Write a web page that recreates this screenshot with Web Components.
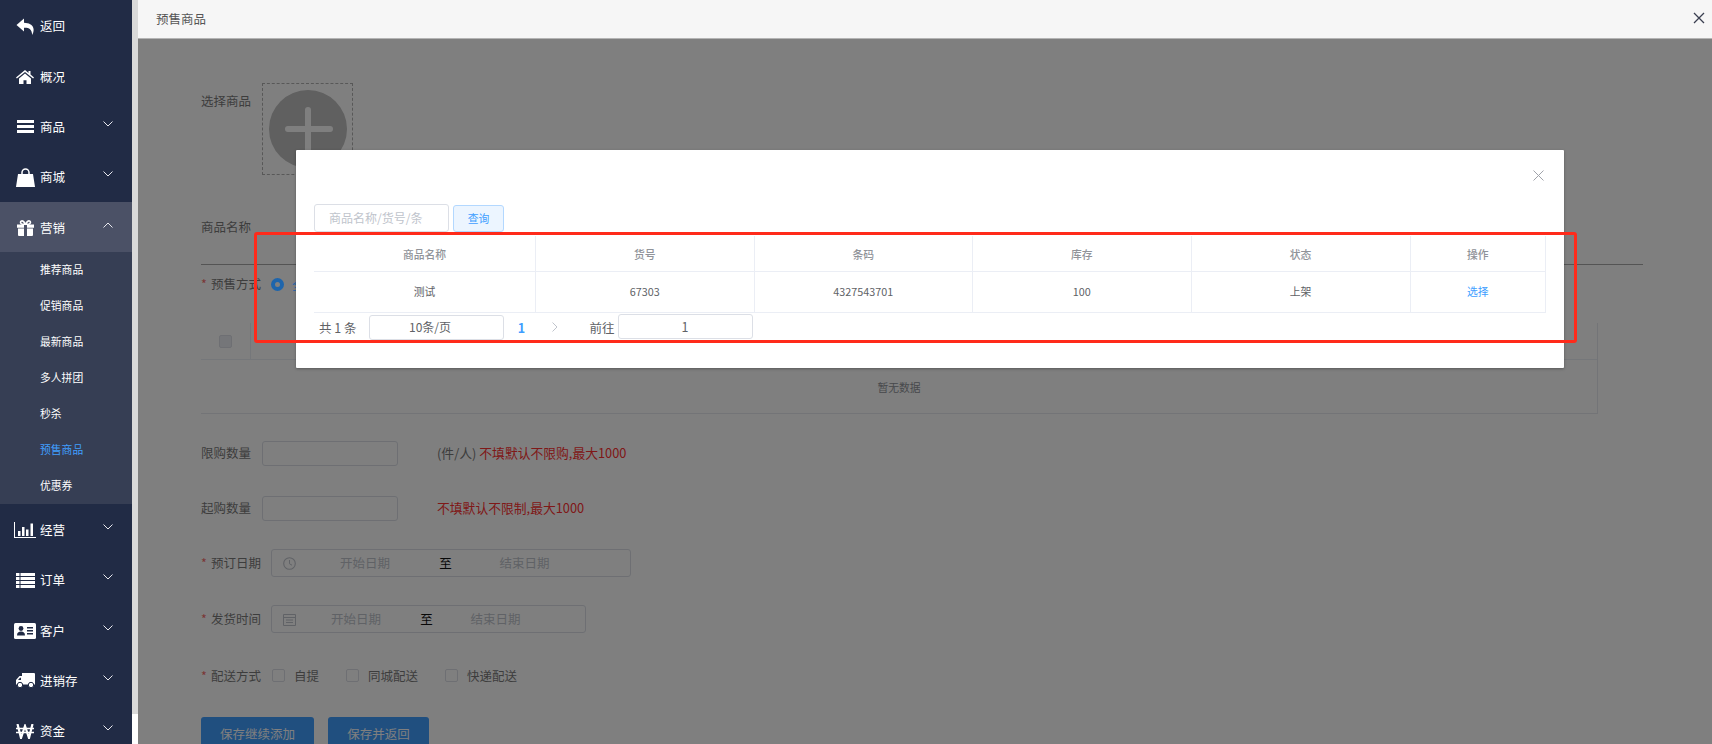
<!DOCTYPE html>
<html lang="zh-CN"><head><meta charset="utf-8"><title>预售商品</title>
<style>
html,body{margin:0;padding:0;height:100%;overflow:hidden;background:#fff}
body{font:12.5px/1.2 "Noto Sans CJK SC","Liberation Sans",sans-serif;color:#606266}
</style></head><body>
<app-page>
  <side-nav slot="nav">
    <nav-item icon="reply">返回</nav-item>
    <nav-item icon="home">概况</nav-item>
    <nav-item icon="bars" chev="down">商品</nav-item>
    <nav-item icon="bag" chev="down">商城</nav-item>
    <nav-item icon="gift" chev="up" active>营销</nav-item>
    <nav-group>
      <nav-sub>推荐商品</nav-sub><nav-sub>促销商品</nav-sub><nav-sub>最新商品</nav-sub><nav-sub>多人拼团</nav-sub><nav-sub>秒杀</nav-sub><nav-sub current>预售商品</nav-sub><nav-sub>优惠券</nav-sub>
    </nav-group>
    <nav-item icon="chart" chev="down">经营</nav-item>
    <nav-item icon="list" chev="down">订单</nav-item>
    <nav-item icon="card" chev="down">客户</nav-item>
    <nav-item icon="truck" chev="down">进销存</nav-item>
    <nav-item icon="won" chev="down">资金</nav-item>
  </side-nav>
  <page-head slot="head">预售商品</page-head>

  <form-row style="margin-top:44px;height:92px;align-items:flex-start"><span slot="label" style="padding-top:10px;display:block">选择商品</span><upload-box></upload-box></form-row>
  <form-row style="margin-top:37px;height:28px"><span slot="label">商品名称</span></form-row>
  <form-rule style="margin-top:24px"></form-rule>
  <form-row req lift style="margin-top:5px;height:28px"><span slot="label">预售方式</span><radio-dot></radio-dot></form-row>
  <empty-table style="margin-top:25px"></empty-table>
  <form-row lift style="margin-top:27px;height:25px"><span slot="label">限购数量</span><text-box></text-box><form-hint unit="(件/人)">不填默认不限购,最大1000</form-hint></form-row>
  <form-row lift style="margin-top:30px;height:25px"><span slot="label">起购数量</span><text-box></text-box><form-hint>不填默认不限制,最大1000</form-hint></form-row>
  <form-row req lift style="margin-top:28px;height:28px"><span slot="label">预订日期</span><date-range icon="clock" style="--w:360px;--a:128px;--b:33px;--c:125px"></date-range></form-row>
  <form-row req lift style="margin-top:28px;height:28px"><span slot="label">发货时间</span><date-range icon="cal" style="--w:315px;--a:110px;--b:31px;--c:107px"></date-range></form-row>
  <form-row req style="margin-top:28px;height:28px"><span slot="label">配送方式</span>
    <check-opt style="margin-right:16px">自提</check-opt><check-opt style="margin-right:16px">同城配送</check-opt><check-opt>快递配送</check-opt></form-row>
  <action-bar style="margin-top:28px"><blue-btn style="width:113px">保存继续添加</blue-btn><blue-btn style="width:101px">保存并返回</blue-btn></action-bar>

  <pick-modal slot="modal"></pick-modal>
</app-page>

<script>
const ICONS={
reply:'<svg width="19" height="17" viewBox="0 0 19 17"><path fill="#fff" d="M8 .5 .5 7l7.500 6.500V9.700c5-.2 7.800 1.300 8.300 7.300 2.700-4.800 2.200-11.800-8.300-12.200z"/></svg>',
home:'<svg width="18" height="14" viewBox="0 0 18 14"><path fill="#fff" d="M9 0 0 7.400l.9 1.100L9 2l8.100 6.500.9-1.100-3.500-2.900V1h-2v1.900zM9 3.500 3 8.400V14h4.500v-3.700h3V14H15V8.400z"/></svg>',
bars:'<svg width="17" height="13" viewBox="0 0 17 13"><path fill="#fff" d="M0 0h17v3H0zM0 5h17v3H0zM0 10h17v3H0z"/></svg>',
bag:'<svg width="19" height="19" viewBox="0 0 19 19"><path fill="#fff" d="M2 6h15l2 13H0z"/><path fill="none" stroke="#fff" stroke-width="1.500" d="M6 8V4.500a3.500 3.500 0 0 1 7 0V8"/></svg>',
gift:'<svg width="17" height="16" viewBox="0 0 17 16"><path fill="#fff" d="M0 4.500h7v3.200H0zM10 4.500h7v3.200h-7zM1 8.500h6V16H2a1 1 0 0 1-1-1zM10 8.500h6V15a1 1 0 0 1-1 1h-5z"/><path fill="none" stroke="#fff" stroke-width="1.600" d="M8.300 4.200C7 1 5.200.4 4.200 1.200 3 2.200 3.600 4 5.500 4.200zM8.700 4.200C10 1 11.800.4 12.800 1.200c1.200 1 .6 2.800-1.300 3z"/></svg>',
chart:'<svg width="22" height="16" viewBox="0 0 22 16"><path fill="#fff" d="M0 0h1v15h21v1H0z"/><path fill="#fff" d="M4 9h2.500v5H4zM8 5h2.500v9H8zM12 7.500h2.500V14H12zM16.500 1.500H19V14h-2.500z"/></svg>',
list:'<svg width="19" height="15" viewBox="0 0 19 15"><path fill="#fff" d="M0 0h3.500v3H0zM4.500 0H19v3H4.500zM0 4h3.500v3H0zM4.500 4H19v3H4.500zM0 8h3.500v3H0zM4.500 8H19v3H4.500zM0 12h3.500v3H0zM4.500 12H19v3H4.500z"/></svg>',
card:'<svg width="22" height="16" viewBox="0 0 22 16"><rect width="22" height="16" rx="1.500" fill="#fff"/><circle cx="7" cy="5.500" r="2.400" fill="#212b45"/><path fill="#212b45" d="M3 12.500c0-3 1.600-4 4-4s4 1 4 4zM13 4h6v1.400h-6zM13 7h6v1.400h-6zM13 10h6v1.400h-6z"/></svg>',
truck:'<svg width="19" height="15" viewBox="0 0 19 15"><path fill="#fff" d="M6 0h12a1 1 0 0 1 1 1v10.500H6zM6 3H3.500L0 7v4.500h6z"/><circle cx="4" cy="12" r="2.700" fill="#fff" stroke="#212b45"/><circle cx="15" cy="12" r="2.700" fill="#fff" stroke="#212b45"/><path fill="#212b45" d="M2 7l2-2.300h1V7z"/></svg>',
won:'<svg width="18" height="15" viewBox="0 0 18 15"><path fill="none" stroke="#fff" stroke-width="2.200" d="M1.500 0 5 14 9 2 13 14 16.500 0"/><path fill="none" stroke="#fff" stroke-width="1.500" d="M0 4.500h18M0 8.500h18"/></svg>'
};
const def=(name,css,html)=>customElements.define(name,class extends HTMLElement{
  constructor(){super();this.attachShadow({mode:'open'}).innerHTML=`<style>${css}</style>${typeof html==='function'?'':html}`}
  connectedCallback(){if(typeof html==='function'&&!this._d){this._d=1;this.shadowRoot.innerHTML+=html(this)}}
});

def('app-page',`:host{display:flex;width:1712px;height:744px;overflow:hidden;position:relative}
.gutter{width:6px;flex:none;background:linear-gradient(#d9d9d9 0 714px,#fff 714px)}
.main{flex:1;min-width:0;display:flex;flex-direction:column}
.body{flex:1;min-height:0;position:relative;overflow:hidden;padding-left:63px;background:#fff}
.mask{position:absolute;inset:0;background:rgba(0,0,0,.5)}
.mark{position:absolute;z-index:3;left:254px;top:232px;width:1323px;height:111px;box-sizing:border-box;border:3px solid #ff2a1a;border-radius:3px;pointer-events:none}`,
`<slot name="nav"></slot><div class="gutter"></div><div class="main"><slot name="head"></slot><div class="body"><slot></slot><div class="mask"></div><slot name="modal"></slot></div></div><div class="mark"></div>`);

def('side-nav',`:host{display:block;width:132px;height:744px;flex:none;background:#212b45;overflow:hidden;color:#fff}`,`<slot></slot>`);
def('nav-item',`:host{display:flex;align-items:center;height:50.4px;padding-left:14px;box-sizing:border-box;color:#fff;font-size:12.5px}
:host([active]){background:#4b5166}
.i{width:22px;height:100%;display:flex;align-items:center;justify-content:center;padding-top:2px;box-sizing:border-box;margin-right:4px}
.t{padding-top:1px}
.c{margin-left:auto;margin-right:19px;margin-bottom:4px;display:flex}`,
h=>{const c=h.getAttribute('chev');return `<span class="i">${ICONS[h.getAttribute('icon')]||''}</span><span class="t"><slot></slot></span>`+(c?`<span class="c"><svg width="10" height="6" viewBox="0 0 10 6"><path fill="none" stroke="#e8e8ee" d="${c==='up'?'M.5 5.500 5 1l4.500 4.500':'M.5.5 5 5 9.500.5'}"/></svg></span>`:'')});
def('nav-group',`:host{display:block;background:#363e54;height:251.600px}`,`<slot></slot>`);
def('nav-sub',`:host{display:flex;align-items:center;height:36px;padding-left:40px;font-size:10.8px;color:#fff}
:host([current]){color:#409eff}`,`<slot></slot>`);

def('page-head',`:host{display:flex;align-items:center;justify-content:space-between;height:39px;box-sizing:border-box;padding:0 7px 2px 18px;background:#f6f6f6;border-bottom:1px solid #b4b4b4;color:#555;font-size:12.5px;flex:none}`,
`<slot></slot><svg width="12" height="12" viewBox="0 0 12 12"><path stroke="#3a3f50" stroke-width="1.300" d="M1 1l10 10M11 1 1 11"/></svg>`);

def('form-row',`:host{display:flex;align-items:center;gap:11px}
.l{display:flex;flex:none;color:#7b7b7b}
:host([lift]) .l{padding-bottom:2px}
.s{display:none;width:10px;color:#f56c6c}
:host([req]) .s{display:block}`,`<span class="l"><span class="s">*</span><slot name="label"></slot></span><slot></slot>`);
def('form-rule',`:host{display:block;width:1442px;height:1px;background:#a8a8a8}`,``);
def('upload-box',`:host{display:flex;align-items:center;justify-content:center;width:91px;height:92px;box-sizing:border-box;border:1px dashed #b0b0b0}`,
`<svg width="78" height="78" viewBox="0 0 78 78"><circle cx="39" cy="39" r="39" fill="#c0c0c0"/><path stroke="#fff" stroke-width="6" stroke-linecap="round" d="M39 20v45M19 39h42"/></svg>`);
def('radio-dot',`:host{display:flex;align-items:center;gap:8px;margin-left:-1px;color:#1e65ac;position:relative;z-index:1}
b{width:13px;height:13px;border-radius:50%;background:#1e65ac;display:flex;align-items:center;justify-content:center}
b:after{content:"";width:5px;height:5px;border-radius:50%;background:#808080}`,`<b></b><span>全部商品</span>`);
def('empty-table',`:host{display:grid;grid-template-columns:49px 1fr;grid-template-rows:37px 54px;width:1397px;height:91px;box-sizing:border-box;border-right:1px solid #e6e8ee;border-bottom:1px solid #e6e8ee;color:#909399;font-size:10.8px}
.c{display:flex;align-items:center;justify-content:center;border-bottom:1px solid #ebeef5}
.c:first-child{padding-right:10px}
.c+.c{border-left:1px solid #ebeef5}
.c i{width:13px;height:13px;border-radius:2px;background:#eaecf2;border:1px solid #dcdfe6;box-sizing:border-box}
.e{grid-column:1/3;display:flex;align-items:center;justify-content:center}`,
`<div class="c"><i></i></div><div class="c"></div><div class="e">暂无数据</div>`);
def('text-box',`:host{display:block;width:136px;height:100%;box-sizing:border-box;border:1px solid #dcdfe6;border-radius:3px;background:#fff}`,``);
def('form-hint',`:host{display:flex;gap:3px;margin-left:28px;padding-bottom:2px;color:#ff3030;font-size:12.8px}.u{color:#7b7b7b}.u:empty{display:none}`,
h=>`<span class="u">${h.getAttribute('unit')||''}</span><span><slot></slot></span>`);
def('date-range',`:host{display:flex;align-items:center;margin-left:-1px;width:var(--w);height:100%;box-sizing:border-box;border:1px solid #dcdfe6;border-radius:3px;padding:0 0 2px 5px}
.i{width:24px;display:flex;justify-content:center;padding-top:2px}
.p{color:#c0c4cc;text-align:center}
.a{width:var(--a)}.c{width:var(--c)}
.b{width:var(--b);text-align:center;color:#111}`,
h=>`<span class="i">${h.getAttribute('icon')==='clock'
?'<svg width="13" height="13" viewBox="0 0 13 13"><circle cx="6.500" cy="6.500" r="5.800" fill="none" stroke="#c0c4cc" stroke-width="1.100"/><path fill="none" stroke="#c0c4cc" d="M6.500 3v3.800l2.500 1.400"/></svg>'
:'<svg width="13" height="13" viewBox="0 0 13 13"><path fill="none" stroke="#c0c4cc" d="M.5 1.500h12v11H.5zM.5 4.500h12M3 7h7M3 9.500h7"/></svg>'}</span><span class="p a">开始日期</span><span class="b">至</span><span class="p c">结束日期</span>`);
def('check-opt',`:host{display:flex;align-items:center;gap:9px;color:#7b7b7b}
i{width:13px;height:13px;box-sizing:border-box;border:1px solid #dcdfe6;border-radius:2px;background:#fff}`,`<i></i><span><slot></slot></span>`);
def('action-bar',`:host{display:flex;gap:14px}`,`<slot></slot>`);
def('blue-btn',`:host{display:flex;align-items:center;justify-content:center;height:34px;border-radius:3px;background:#409eff;color:#fff;font-size:12.5px;line-height:14px}`,`<slot></slot>`);

def('pick-modal',`:host{position:absolute;z-index:2;left:158px;top:111px;width:1268px;height:218px;box-sizing:border-box;background:#fff;border-radius:1px;box-shadow:0 1px 3px rgba(0,0,0,.3);padding:54px 18px 0;font-size:12.5px;color:#606266}
.x{position:absolute;right:20px;top:20px;display:flex}
.s{display:flex;gap:4px;height:28px}
.in{width:135px;box-sizing:border-box;border:1px solid #dcdfe6;border-radius:3px;padding-left:14px;color:#c0c4cc;font-size:12px;display:flex;align-items:center}
.q{width:51px;height:27px;margin-top:1px;box-sizing:border-box;border:1px solid #b3d8ff;border-radius:3px;background:#ecf5ff;color:#409eff;font-size:10.8px;display:flex;align-items:center;justify-content:center}
.t{display:grid;grid-template-columns:222px 218.500px 218.500px 218.500px 219px 135.500px;width:1232px;margin-top:4px;font-size:10.8px}
.t>div{display:flex;align-items:center;justify-content:center;border-bottom:1px solid #ebeef5;border-right:1px solid #ebeef5;box-sizing:border-box}
.t>.h{height:36px;color:#909399;font-weight:500;padding-top:2px}
.t>.r{height:41px;padding-bottom:2px}
.t>.link{color:#409eff}
.p{display:flex;align-items:center;height:28px;padding-left:5px}
.box{box-sizing:border-box;border:1px solid #dcdfe6;border-radius:3px;height:25px;display:flex;align-items:center;justify-content:center;width:135px}
.n{color:#409eff;font-weight:700;width:16px;text-align:center;margin-left:10px}
.g{margin-left:22px;display:flex}
.go{margin-left:32px;margin-right:3px}`,
`<span class="x"><svg width="11" height="11" viewBox="0 0 11 11"><path stroke="#a0a3aa" d="M.5.5l10 10M10.500.5l-10 10"/></svg></span>
<div class="s"><div class="in">商品名称/货号/条</div><div class="q">查询</div></div>
<div class="t"><div class="h">商品名称</div><div class="h">货号</div><div class="h">条码</div><div class="h">库存</div><div class="h">状态</div><div class="h">操作</div>
<div class="r">测试</div><div class="r">67303</div><div class="r">4327543701</div><div class="r">100</div><div class="r">上架</div><div class="r link">选择</div></div>
<div class="p"><span>共 1 条</span><span class="box" style="margin-left:12px;padding-right:12px;font-size:12px">10条/页</span><span class="n">1</span><span class="g"><svg width="6" height="10" viewBox="0 0 6 10"><path fill="none" stroke="#c0c4cc" d="M.5.5 5 5 .5 9.500"/></svg></span><span class="go">前往</span><span class="box" style="margin-top:-2px">1</span></div>`);
</script>
</body></html>
